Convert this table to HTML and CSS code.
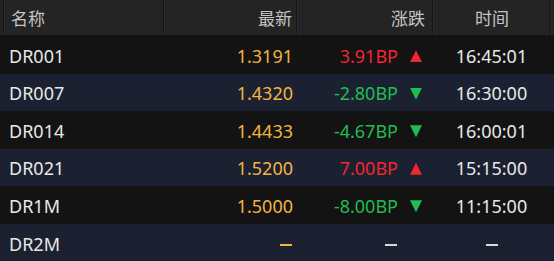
FILE: index.html
```html
<!DOCTYPE html>
<html lang="zh">
<head>
<meta charset="utf-8">
<link rel="stylesheet" href="styles.css">
</head>
<body>
<div class="board">
  <div class="row head">
    <div class="cell name">名称</div>
    <div class="cell num">最新</div>
    <div class="cell chg">涨跌</div>
    <div class="cell time">时间</div>
  </div>
  <div class="row dark">
    <div class="cell name">DR001</div>
    <div class="cell num price">1.3191</div>
    <div class="cell chg up"><span class="val">3.91BP</span><span class="tri tri-up"></span></div>
    <div class="cell time">16:45:01</div>
  </div>
  <div class="row blue">
    <div class="cell name">DR007</div>
    <div class="cell num price">1.4320</div>
    <div class="cell chg down"><span class="val">-2.80BP</span><span class="tri tri-down"></span></div>
    <div class="cell time">16:30:00</div>
  </div>
  <div class="row dark">
    <div class="cell name">DR014</div>
    <div class="cell num price">1.4433</div>
    <div class="cell chg down"><span class="val">-4.67BP</span><span class="tri tri-down"></span></div>
    <div class="cell time">16:00:01</div>
  </div>
  <div class="row blue">
    <div class="cell name">DR021</div>
    <div class="cell num price">1.5200</div>
    <div class="cell chg up"><span class="val">7.00BP</span><span class="tri tri-up"></span></div>
    <div class="cell time">15:15:00</div>
  </div>
  <div class="row dark">
    <div class="cell name">DR1M</div>
    <div class="cell num price">1.5000</div>
    <div class="cell chg down"><span class="val">-8.00BP</span><span class="tri tri-down"></span></div>
    <div class="cell time">11:15:00</div>
  </div>
  <div class="row blue last">
    <div class="cell name">DR2M</div>
    <div class="cell num price"><span class="dash" title="—"></span></div>
    <div class="cell chg"><span class="dash" title="—"></span><span class="tri"></span></div>
    <div class="cell time"><span class="dash" title="—"></span></div>
  </div>
</div>
</body>
</html>
```

FILE: styles.css
```css
html, body {
  margin: 0;
  padding: 0;
  background: #1b2130;
}
body {
  width: 554px;
  height: 261px;
  overflow: hidden;
  font-family: "Noto Sans", "Noto Sans CJK SC", sans-serif;
  font-size: 18px;
  color: #e8e8e8;
}
.board {
  display: flex;
  flex-direction: column;
}
.row {
  display: grid;
  grid-template-columns: 3px 160px 133px 136px 117px 5px;
  height: 37.5px;
  align-items: center;
}
.row::before {
  content: "";
}
.head {
  height: 36px;
  background: #242424;
  color: #c4c4c4;
  font-family: "Noto Sans CJK SC", sans-serif;
  font-size: 17px;
  border-bottom: 1px solid #141414;
  box-sizing: border-box;
  align-items: stretch;
}
.head .cell {
  display: flex;
  align-items: center;
  padding-top: 0;
  border-left: 1px solid #151515;
  box-shadow: inset 1px 0 0 #2c2c2c;
}
.head::after {
  content: "";
  border-left: 1px solid #151515;
}
.head .name {
  padding-left: 7px;
}
.head .num {
  justify-content: flex-end;
  padding-right: 4px;
}
.head .chg {
  justify-content: flex-end;
  padding-right: 7px;
}
.head .time {
  justify-content: center;
}
.dark {
  background: #131313;
}
.blue {
  background: #1b2130;
}
.last {
  border-bottom: 1px dashed #5a5f68;
  box-sizing: border-box;
  height: 39px;
}
.cell {
  height: 100%;
  box-sizing: border-box;
  display: flex;
  align-items: center;
  white-space: nowrap;
  padding-top: 2px;
}
.name {
  padding-left: 6px;
}
.num {
  justify-content: flex-end;
  padding-right: 3px;
}
.price {
  color: #f3b43f;
}
.chg {
  justify-content: flex-end;
  padding-right: 10px;
  gap: 12px;
}
.up { color: #f2262e; }
.down { color: #20bd50; }
.time {
  justify-content: center;
  padding-left: 2px;
}
.tri {
  width: 12px;
  height: 12px;
  display: inline-block;
  margin-top: 1px;
}
.tri-up {
  background: #f2262e;
  clip-path: polygon(50% 0, 100% 100%, 0 100%);
}
.tri-down {
  background: #20bd50;
  clip-path: polygon(0 0, 100% 0, 50% 100%);
}
.dash {
  display: inline-block;
  width: 12px;
  height: 2px;
  background: #d8d8d8;
  margin-top: 2px;
}
.price .dash {
  background: #f3b43f;
  margin-right: 1px;
}
.chg .dash {
  margin-right: 1px;
}
```
